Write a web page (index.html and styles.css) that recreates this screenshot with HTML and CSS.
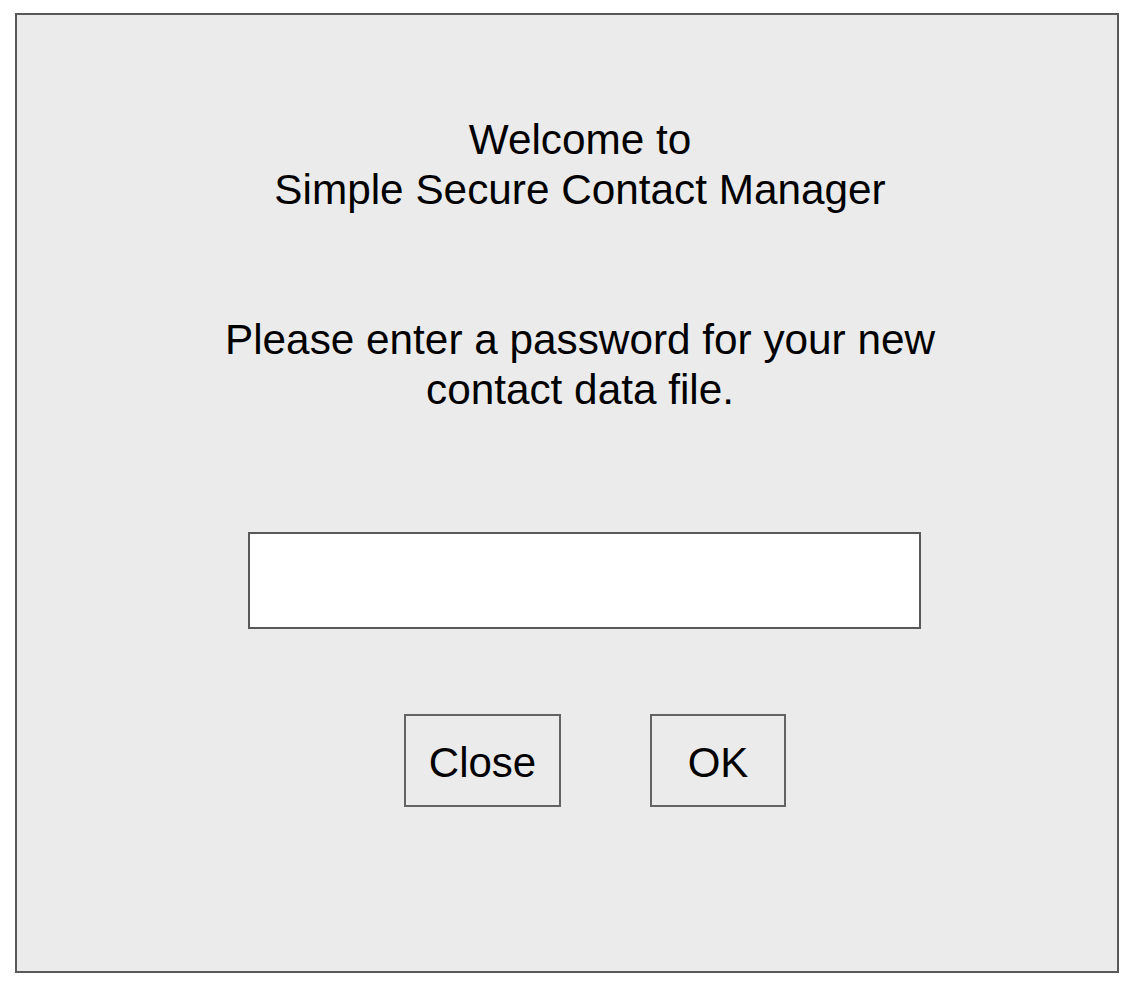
FILE: index.html
```html
<!DOCTYPE html>
<html lang="en">
<head>
<meta charset="utf-8">
<title>Simple Secure Contact Manager</title>
<link rel="stylesheet" href="styles.css">
</head>
<body>
<div class="dialog">
  <h1 class="title">Welcome to<br>Simple Secure Contact Manager</h1>
  <p class="prompt">Please enter a password for your new<br>contact data file.</p>
  <input class="password" type="password" aria-label="Password">
  <div class="actions">
    <button class="btn btn-close" type="button">Close</button>
    <button class="btn btn-ok" type="button">OK</button>
  </div>
</div>
</body>
</html>
```
FILE: styles.css
```css
html, body {
  margin: 0;
  padding: 0;
  background: #ffffff;
}
body {
  font-family: "Liberation Sans", Arial, sans-serif;
  color: #000;
}
.dialog {
  box-sizing: border-box;
  margin: 13px 0 0 15px;
  width: 1104px;
  height: 960px;
  border: 2px solid #595959;
  background: #ebebeb;
  padding-top: 100px;
  display: flex;
  flex-direction: column;
  align-items: flex-start;
}
.title, .prompt {
  box-sizing: border-box;
  width: 100%;
  margin: 0;
  padding-left: 26px;
  text-align: center;
  font-size: 42.3px;
  font-weight: normal;
  line-height: 50px;
}
.prompt {
  margin-top: 100px;
}
.password {
  box-sizing: border-box;
  display: block;
  margin: 117px 0 0 231px;
  width: 673px;
  height: 97px;
  border: 2px solid #595959;
  background: #ffffff;
  padding: 0;
  outline: none;
}
.actions {
  display: flex;
  gap: 89px;
  margin: 85px 0 0 387px;
}
.btn {
  box-sizing: border-box;
  height: 93px;
  border: 2px solid #636363;
  background: #ebebeb;
  font-family: "Liberation Sans", Arial, sans-serif;
  font-size: 42px;
  line-height: 93px;
  color: #000;
  padding: 0;
  text-align: center;
  overflow: hidden;
}
.btn-close {
  width: 157px;
}
.btn-ok {
  width: 136px;
}
```
